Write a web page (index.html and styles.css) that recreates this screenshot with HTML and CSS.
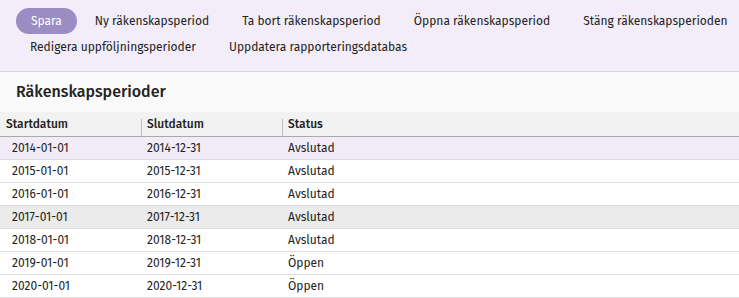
FILE: index.html
```html
<!DOCTYPE html>
<html lang="sv">
<head>
<meta charset="utf-8">
<title>Räkenskapsperioder</title>
<link rel="stylesheet" href="styles.css">
</head>
<body>
<div class="toolbar">
  <div class="tb-row">
    <button class="btn btn-primary">Spara</button>
    <button class="btn">Ny räkenskapsperiod</button>
    <button class="btn">Ta bort räkenskapsperiod</button>
    <button class="btn">Öppna räkenskapsperiod</button>
    <button class="btn">Stäng räkenskapsperioden</button>
  </div>
  <div class="tb-row tb-row2">
    <button class="btn">Redigera uppföljningsperioder</button>
    <button class="btn">Uppdatera rapporteringsdatabas</button>
  </div>
</div>
<div class="panel">
  <h1 class="title">Räkenskapsperioder</h1>
  <table class="grid">
    <thead>
      <tr>
        <th class="c1">Startdatum</th>
        <th class="c2"><span class="sep"></span>Slutdatum</th>
        <th class="c3"><span class="sep"></span>Status</th>
      </tr>
    </thead>
    <tbody>
      <tr class="selected"><td class="c1">2014-01-01</td><td>2014-12-31</td><td>Avslutad</td></tr>
      <tr><td class="c1">2015-01-01</td><td>2015-12-31</td><td>Avslutad</td></tr>
      <tr><td class="c1">2016-01-01</td><td>2016-12-31</td><td>Avslutad</td></tr>
      <tr class="hover"><td class="c1">2017-01-01</td><td>2017-12-31</td><td>Avslutad</td></tr>
      <tr><td class="c1">2018-01-01</td><td>2018-12-31</td><td>Avslutad</td></tr>
      <tr><td class="c1">2019-01-01</td><td>2019-12-31</td><td>Öppen</td></tr>
      <tr><td class="c1">2020-01-01</td><td>2020-12-31</td><td>Öppen</td></tr>
    </tbody>
  </table>
</div>
</body>
</html>
```
FILE: styles.css
```css
* { box-sizing: border-box; }
html, body { margin: 0; padding: 0; }
body {
  font-family: "Fira Sans", Roboto, "Liberation Sans", sans-serif;
  font-size: 12px;
  color: #222;
  background: #fff;
  overflow: hidden;
}
.toolbar {
  background: #f2edf8;
  border-bottom: 1px solid #d9d6dc;
  padding: 8px 0 11px 16px;
  height: 72px;
}
.tb-row {
  display: flex;
  align-items: center;
  gap: 3px;
  height: 26px;
}
.tb-row2 { margin-left: -1px; }
.btn {
  font: inherit;
  color: #222;
  background: transparent;
  border: 0;
  height: 26px;
  padding: 0 15px;
  border-radius: 13px;
  white-space: nowrap;
  cursor: pointer;
}
.btn-primary {
  background: #9c8cc4;
  color: #fff;
}
.panel {
  background: #fafafa;
}
.title {
  margin: 0;
  height: 40px;
  padding: 9px 0 0 16px;
  font-size: 16px;
  font-weight: 500;
  line-height: 22px;
  color: #222;
}
.grid {
  width: 100%;
  border-collapse: collapse;
  table-layout: fixed;
}
.grid th {
  background: #f2f2f2;
  text-align: left;
  font-weight: 500;
  height: 24px;
  padding: 0 6px;
  border-bottom: 1px solid #aaa;
  position: relative;
}
.grid th.c1 { width: 141px; }
.grid th.c2 { width: 141px; }
.sep {
  position: absolute;
  left: 0;
  bottom: 0;
  height: 17px;
  border-left: 1px solid #bbb;
}
.grid td {
  background: #fff;
  height: 23px;
  padding: 0 6px;
  border-bottom: 1px solid #ddd;
  white-space: nowrap;
}
.grid td.c1 { padding-left: 12px; }
.grid tr.selected td { background: #f1ecf7; }
.grid tr.hover td { background: #ebebeb; }
```
